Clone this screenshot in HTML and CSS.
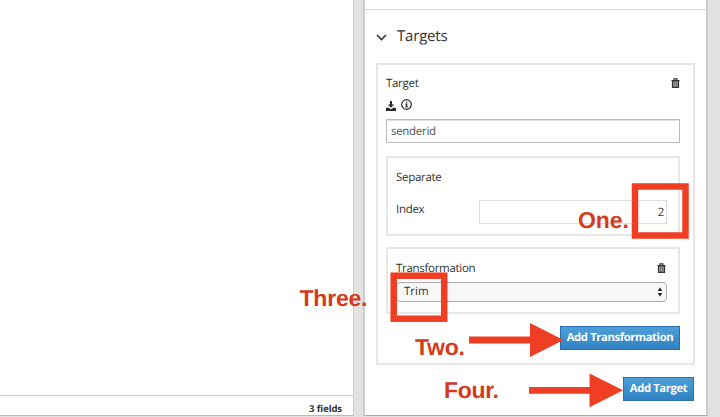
FILE: index.html
```
<!DOCTYPE html>
<html lang="en">
<head>
<meta charset="utf-8">
<title>Targets</title>
<link rel="stylesheet" href="styles.css">
</head>
<body>
<svg width="0" height="0" class="defs">
  <symbol id="trash" viewBox="0 0 9 11">
    <path d="M.5 2.5h8M3 2V.9h3V2" fill="none" stroke="#333" stroke-width="1.1"/>
    <path d="M1.5 3h6v6.400h-6z" fill="#999" stroke="#333" stroke-width="1.2"/>
    <path d="M3.500 4v4.600M5.500 4v4.600" stroke="#666" stroke-width=".7"/>
  </symbol>
</svg>
<div class="workspace">
  <section class="source">
    <div class="canvas"></div>
    <footer class="count">3 fields</footer>
  </section>
  <main class="details">
    <div class="strip"></div>
    <section class="targets">
      <h2 class="heading">
        <svg class="chevron" width="11" height="7" viewBox="0 0 11 7"><path d="M1 1l4.500 4.600L10 1" fill="none" stroke="#333" stroke-width="1.500"/></svg>
        <span>Targets</span>
      </h2>
      <div class="card target">
        <div class="row"><span>Target</span><svg class="trash"><use href="#trash"/></svg></div>
        <div class="tools">
          <svg width="10" height="10" viewBox="0 0 10 10"><path d="M4 0h2v3.400h2.200L5 6.700 1.800 3.400H4zM0 6.800h2.600L5 8.200l2.400-1.400H10V10H0z" fill="#292929"/></svg>
          <svg class="info" width="11" height="11" viewBox="0 0 11 11"><circle cx="5.500" cy="5.500" r="4.800" fill="none" stroke="#292929" stroke-width="1.200"/><path d="M5 2.400h1.300v1.300H5zM4.300 4.600h2v3h.6v.8H4.300v-.8h.6V5.400h-.6z" fill="#292929"/></svg>
        </div>
        <div class="field">senderid</div>
        <div class="card separate">
          <div>Separate</div>
          <div class="row index"><span>Index</span><div class="number">2</div></div>
        </div>
        <div class="card transformation">
          <div class="row"><span>Transformation</span><svg class="trash inset"><use href="#trash"/></svg></div>
          <div class="select"><span>Trim</span><svg width="6" height="10" viewBox="0 0 6 10"><path d="M3 .4l2.400 3.700H.6zM3 9.600L.6 5.900h4.800z" fill="#222"/></svg></div>
        </div>
        <div class="action"><button class="btn wide">Add Transformation</button></div>
      </div>
      <div class="action last"><button class="btn">Add Target</button></div>
    </section>
  </main>
</div>
<svg class="notes" width="720" height="417" viewBox="0 0 720 417">
  <g fill="none" stroke="#ef3e23">
    <rect x="635" y="186.500" width="50.500" height="49" stroke-width="6.500"/>
    <rect x="393.700" y="275.700" width="50.500" height="43" stroke-width="6.500"/>
  </g>
  <path d="M469 336.500h61v-13.500l33.500 17-33.500 17v-13.500h-61zM529 387h60.500v-13.500l33.500 16.800-33.500 17v-13.500H529z" fill="#ef3e23"/>
  <g class="labels">
    <text x="578" y="228" textLength="51">One.</text>
    <text x="299.500" y="306" textLength="68">Three.</text>
    <text x="415" y="354.500" textLength="50">Two.</text>
    <text x="444" y="397.500" textLength="55">Four.</text>
  </g>
</svg>
</body>
</html>
```
FILE: styles.css
```
* { box-sizing: border-box; }
body {
  margin: 0;
  width: 720px;
  height: 417px;
  overflow: hidden;
  position: relative;
  background: #e1e1e1;
  color: #333;
  font: 11.5px/16px "Open Sans", sans-serif;
  letter-spacing: -.3px;
  text-rendering: geometricPrecision;
}
.defs { position: absolute; }
.workspace { display: flex; height: 416px; }
.source {
  display: flex;
  flex-direction: column;
  width: 354px;
  margin-right: 9px;
  background: #fff;
  border-right: 1px solid #d0d0d0;
  border-bottom: 1px solid #bbb;
}
.canvas { flex: 1; }
.count {
  height: 20px;
  padding: 5px 11px 0 0;
  border-top: 1px solid #ccc;
  text-align: right;
  font-size: 9.5px;
  line-height: 15px;
  font-weight: 700;
  letter-spacing: -.1px;
}
.details {
  width: 345px;
  background: #fff;
  border: solid #cdcdcd;
  border-width: 0 2px 1px;
  border-bottom-color: #aaa;
}
.strip { height: 10px; border-bottom: 1px solid #d4d4d4; }
.targets { padding: 15px 11px 0; }
.heading {
  display: flex;
  align-items: center;
  gap: 10px;
  height: 22px;
  margin: 0 0 16px;
  font-size: 15px;
  font-weight: 400;
  letter-spacing: -.2px;
}
.chevron { margin-top: 3px; }
.card { border: 2px solid #e7e7e7; }
.target { height: 302px; padding: 10px 13px 0 8px; }
.row { display: flex; justify-content: space-between; align-items: center; height: 16px; }
.row span { margin-top: 2px; }
.trash { width: 9px; height: 11px; }
.inset { margin-right: 1px; }
.tools { display: flex; align-items: flex-end; gap: 5px; height: 13px; margin: 7px 0 8px; }
.info { margin-bottom: 1px; }
.field {
  height: 24px;
  padding: 4px;
  border: 1px solid #bbb;
  box-shadow: inset 0 1px 1px #ddd;
  color: #555;
}
.separate { height: 80px; margin-top: 13px; padding: 12px 11px 0 8px; }
.index { height: 24px; margin-top: 14px; align-items: flex-start; }
.number {
  width: 188px;
  height: 24px;
  padding: 4px 2px;
  border: 1px solid #ddd;
  text-align: right;
}
.transformation { height: 67px; margin-top: 11px; padding: 11px 11px 0 8px; }
.select {
  display: flex;
  align-items: center;
  justify-content: space-between;
  height: 20px;
  margin-top: 6px;
  padding: 0 3px 0 7px;
  border: 1px solid #ababab;
  border-radius: 4px;
  background: #f7f7f7;
  letter-spacing: 0;
}
.action { display: flex; justify-content: flex-end; margin-top: 12px; }
.last { padding-right: 1px; }
.btn {
  width: 71px;
  height: 24px;
  padding: 0;
  border: 1px solid #2a70b0;
  background: linear-gradient(#4c9fd7, #3282c4);
  color: #fff;
  font: 700 11.3px/22px "Open Sans", sans-serif;
  letter-spacing: -.4px;
  text-rendering: geometricPrecision;
  white-space: nowrap;
}
.wide { width: 120px; }
.notes { position: absolute; left: 0; top: 0; }
.labels { fill: #d63a1a; font: 700 23px "Liberation Sans", sans-serif; letter-spacing: 0; }
```
